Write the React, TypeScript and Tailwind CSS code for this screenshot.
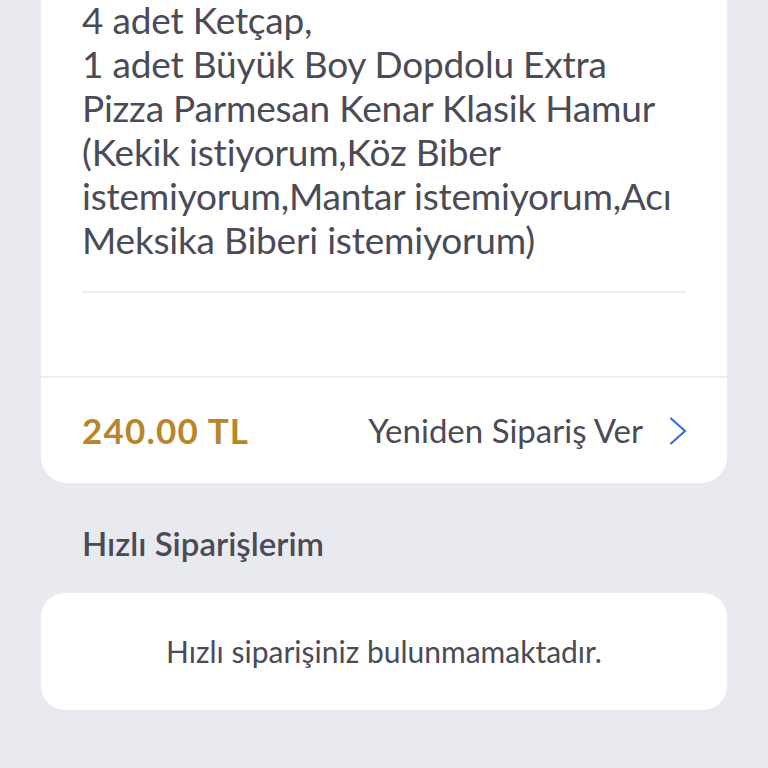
const lines = [
  "4 adet Ketçap,",
  "1 adet Büyük Boy Dopdolu Extra",
  "Pizza Parmesan Kenar Klasik Hamur",
  "(Kekik istiyorum,Köz Biber",
  "istemiyorum,Mantar istemiyorum,Acı",
  "Meksika Biberi istemiyorum)",
];

export default function App() {
  return (
    <div
      className="w-[768px] h-[768px] overflow-hidden bg-[#e9eaf0] text-[#4b4b57]"
      style={{ fontFamily: "Lato, 'Open Sans', sans-serif" }}
    >
      {/* Order card */}
      <div className="mx-[41px] bg-white rounded-b-[26px]">
        <div className="px-[41px]">
          <div className="-mt-[2px] text-[37px] leading-[44px] tracking-[-0.2px] whitespace-nowrap">
            {lines.map((l) => (
              <div key={l}>{l}</div>
            ))}
          </div>
          <div className="mt-[29px] h-[2px] bg-[#efeff2]" />
        </div>
        <div className="h-[83px]" />
        <div className="h-[2px] bg-[#efeff2]" />
        <div className="flex items-center justify-between pl-[41px] pr-[40px] h-[105px]">
          <span className="text-[35px] font-bold tracking-[1.2px] text-[#b8862a]">240.00 TL</span>
          <div className="flex items-center gap-[26px]">
            <span className="text-[33px]">Yeniden Sipariş Ver</span>
            <svg width="18" height="28" viewBox="0 0 18 28" fill="none">
              <path d="M2 1.5 L16 14 L2 26.5" stroke="#2f6fe0" strokeWidth="2.2" strokeLinecap="round" strokeLinejoin="round" />
            </svg>
          </div>
        </div>
      </div>

      {/* Quick orders */}
      <div className="px-[82px] mt-[40px] text-[33px] font-semibold leading-[40px]">
        Hızlı Siparişlerim
      </div>
      <div className="mx-[41px] mt-[30px] h-[117px] bg-white rounded-[24px] flex items-center justify-center text-[30px]">
        Hızlı siparişiniz bulunmamaktadır.
      </div>
    </div>
  );
}
